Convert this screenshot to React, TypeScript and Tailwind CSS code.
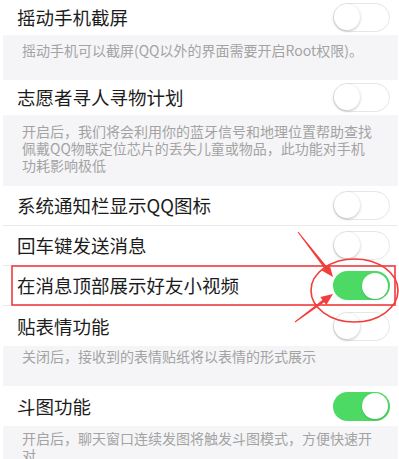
import React from 'react'

const font = { fontFamily: '"Noto Sans CJK SC", "Noto Sans", sans-serif' }

const Toggle = ({ on }: { on: boolean }) =>
  on ? (
    <div className="relative ml-auto mr-[8px] h-[29px] w-[57px] rounded-full bg-[#4cd964]">
      <div className="absolute right-[2px] top-[1.5px] h-[26px] w-[26px] rounded-full bg-white shadow-[0_1px_2px_rgba(0,0,0,0.15)]" />
    </div>
  ) : (
    <div className="relative ml-auto mr-[8px] h-[29px] w-[57px] rounded-full border-[1.5px] border-[#e6e6e6] bg-white">
      <div className="absolute left-0 top-0 h-[26px] w-[26px] rounded-full bg-white shadow-[0_1px_3px_rgba(0,0,0,0.25)]" />
    </div>
  )

const Row = ({
  title,
  on = false,
  h,
  divider = false,
}: {
  title: string
  on?: boolean
  h: string
  divider?: boolean
}) => (
  <div className={`flex items-center bg-white pl-[14px] ${h} ${divider ? 'border-b border-[#ebebeb]' : ''}`}>
    <span className="text-[18.5px] leading-none text-[#1c1c1c]">{title}</span>
    <Toggle on={on} />
  </div>
)

const Desc = ({ children, cls }: { children: React.ReactNode; cls: string }) => (
  <div className={`bg-[#f5f5f7] pl-[19px] text-[14px] leading-[17px] text-[#a3a3a3] ${cls}`}>
    {children}
  </div>
)

export default function App() {
  return (
    <div className="relative h-[459px] w-[399px] overflow-hidden bg-white" style={font}>
      <div className="flex flex-col pl-[3px] pr-[1px]">
        <Row title="摇动手机截屏" h="h-[35px]" />
        <Desc cls="h-[45px] pt-[7px]">摇动手机可以截屏(QQ以外的界面需要开启Root权限)。</Desc>
        <Row title="志愿者寻人寻物计划" h="h-[35px]" />
        <Desc cls="h-[71px] pt-[8px]">
          开启后，我们将会利用你的蓝牙信号和地理位置帮助查找
          <br />
          佩戴QQ物联定位芯片的丢失儿童或物品，此功能对手机
          <br />
          功耗影响极低
        </Desc>
        <Row title="系统通知栏显示QQ图标" h="h-[40px]" divider />
        <Row title="回车键发送消息" h="h-[40px]" divider />
        <Row title="在消息顶部展示好友小视频" on h="h-[40px]" divider />
        <Row title="贴表情功能" h="h-[40px]" />
        <Desc cls="h-[40px] pt-[2px]">关闭后，接收到的表情贴纸将以表情的形式展示</Desc>
        <Row title="斗图功能" on h="h-[40px]" />
        <Desc cls="h-[50px] pt-[4px]">
          开启后，聊天窗口连续发图将触发斗图模式，方便快速开
          <br />
          对
        </Desc>
      </div>

      <svg className="pointer-events-none absolute left-0 top-0" width="399" height="459" viewBox="0 0 399 459">
        <rect x="12" y="266" width="383" height="39" fill="none" stroke="#f23d3d" strokeWidth="1.6" />
        <ellipse cx="354.5" cy="290.5" rx="43.5" ry="31.5" fill="none" stroke="#f23d3d" strokeWidth="1.6" />
        <polygon
          points="297.6,232.3 324.4,268.4 321.7,270.6 333,277 329.5,264.4 326.8,266.6 298.4,231.7"
          fill="#f23d3d"
        />
        <polygon
          points="295.3,322.4 324.2,302.3 326.3,305.1 333,294 320.3,297.1 322.4,299.9 294.7,321.6"
          fill="#f23d3d"
        />
      </svg>
    </div>
  )
}
